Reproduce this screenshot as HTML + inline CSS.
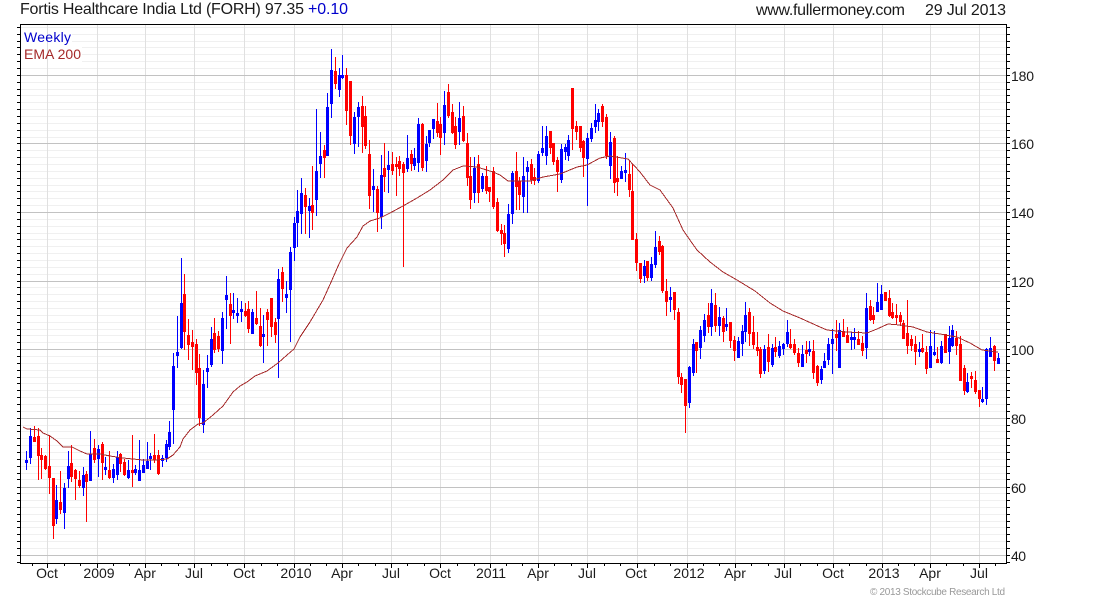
<!DOCTYPE html>
<html><head><meta charset="utf-8"><title>Fortis Healthcare India Ltd</title>
<style>html,body{margin:0;padding:0;background:#fff;width:1100px;height:600px;overflow:hidden}svg{display:block}text{font-family:"Liberation Sans",Arial,sans-serif}</style></head>
<body>
<svg xmlns="http://www.w3.org/2000/svg" width="1100" height="600" viewBox="0 0 1100 600">
<rect width="1100" height="600" fill="#fff"/>
<g shape-rendering="crispEdges" fill="none">
<path stroke="#000" d="M17 562.5h3M17 548.5h3M17 541.5h3M17 534.5h3M17 527.5h3M17 521.5h3M17 514.5h3M17 507.5h3M17 500.5h3M17 493.5h3M17 487.5h3M17 479.5h3M17 473.5h3M17 466.5h3M17 459.5h3M17 452.5h3M17 445.5h3M17 438.5h3M17 431.5h3M17 425.5h3M17 418.5h3M17 411.5h3M17 404.5h3M17 397.5h3M17 390.5h3M17 383.5h3M17 377.5h3M17 370.5h3M17 363.5h3M17 356.5h3M17 349.5h3M17 342.5h3M17 335.5h3M17 329.5h3M17 322.5h3M17 315.5h3M17 308.5h3M17 301.5h3M17 294.5h3M17 287.5h3M17 281.5h3M17 274.5h3M17 267.5h3M17 260.5h3M17 253.5h3M17 246.5h3M17 239.5h3M17 233.5h3M17 226.5h3M17 219.5h3M17 212.5h3M17 205.5h3M17 198.5h3M17 191.5h3M17 185.5h3M17 178.5h3M17 171.5h3M17 164.5h3M17 157.5h3M17 150.5h3M17 143.5h3M17 137.5h3M17 130.5h3M17 123.5h3M17 116.5h3M17 109.5h3M17 102.5h3M17 95.5h3M17 89.5h3M17 82.5h3M17 75.5h3M17 68.5h3M17 61.5h3M17 54.5h3M17 47.5h3M17 41.5h3M17 34.5h3M17 27.5h3M17 555.5h3"/>
<path stroke="#000" d="M1007 562.5h3M1007 548.5h3M1007 541.5h3M1007 534.5h3M1007 527.5h3M1007 521.5h3M1007 514.5h3M1007 507.5h3M1007 500.5h3M1007 493.5h3M1007 487.5h3M1007 479.5h3M1007 473.5h3M1007 466.5h3M1007 459.5h3M1007 452.5h3M1007 445.5h3M1007 438.5h3M1007 431.5h3M1007 425.5h3M1007 418.5h3M1007 411.5h3M1007 404.5h3M1007 397.5h3M1007 390.5h3M1007 383.5h3M1007 377.5h3M1007 370.5h3M1007 363.5h3M1007 356.5h3M1007 349.5h3M1007 342.5h3M1007 335.5h3M1007 329.5h3M1007 322.5h3M1007 315.5h3M1007 308.5h3M1007 301.5h3M1007 294.5h3M1007 287.5h3M1007 281.5h3M1007 274.5h3M1007 267.5h3M1007 260.5h3M1007 253.5h3M1007 246.5h3M1007 239.5h3M1007 233.5h3M1007 226.5h3M1007 219.5h3M1007 212.5h3M1007 205.5h3M1007 198.5h3M1007 191.5h3M1007 185.5h3M1007 178.5h3M1007 171.5h3M1007 164.5h3M1007 157.5h3M1007 150.5h3M1007 143.5h3M1007 137.5h3M1007 130.5h3M1007 123.5h3M1007 116.5h3M1007 109.5h3M1007 102.5h3M1007 95.5h3M1007 89.5h3M1007 82.5h3M1007 75.5h3M1007 68.5h3M1007 61.5h3M1007 54.5h3M1007 47.5h3M1007 41.5h3M1007 34.5h3M1007 27.5h3M1007 555.5h3"/>
<path stroke="#f0f0f0" d="M21 548.5h985M21 541.5h985M21 534.5h985M21 527.5h985M21 521.5h985M21 514.5h985M21 507.5h985M21 500.5h985M21 493.5h985M21 479.5h985M21 473.5h985M21 466.5h985M21 459.5h985M21 452.5h985M21 445.5h985M21 438.5h985M21 431.5h985M21 425.5h985M21 411.5h985M21 404.5h985M21 397.5h985M21 390.5h985M21 383.5h985M21 377.5h985M21 370.5h985M21 363.5h985M21 356.5h985M21 342.5h985M21 335.5h985M21 329.5h985M21 322.5h985M21 315.5h985M21 308.5h985M21 301.5h985M21 294.5h985M21 287.5h985M21 274.5h985M21 267.5h985M21 260.5h985M21 253.5h985M21 246.5h985M21 239.5h985M21 233.5h985M21 226.5h985M21 219.5h985M21 205.5h985M21 198.5h985M21 191.5h985M21 185.5h985M21 178.5h985M21 171.5h985M21 164.5h985M21 157.5h985M21 150.5h985M21 137.5h985M21 130.5h985M21 123.5h985M21 116.5h985M21 109.5h985M21 102.5h985M21 95.5h985M21 89.5h985M21 82.5h985M21 68.5h985M21 61.5h985M21 54.5h985M21 47.5h985M21 41.5h985M21 34.5h985M21 27.5h985"/>
<rect x="21" y="28" width="51" height="17" fill="#fff"/>
<rect x="21" y="45" width="61" height="18" fill="#fff"/>
<path stroke="#e0e0e0" d="M47.5 25V563M97.5 25V563M145.5 25V563M194.5 25V563M244.5 25V563M294.5 25V563M342.5 25V563M391.5 25V563M440.5 25V563M490.5 25V563M538.5 25V563M587.5 25V563M637.5 25V563M687.5 25V563M735.5 25V563M784.5 25V563M833.5 25V563M882.5 25V563M930.5 25V563M979.5 25V563"/>
<path stroke="#c2c2c2" d="M21 555.5h985M21 487.5h985M21 418.5h985M21 349.5h985M21 281.5h985M21 212.5h985M21 143.5h985M21 75.5h985"/>
<path stroke="#000" d="M20.5 24V564M20 24.5H1007M1006.5 24V564M20 563.5H1007"/>
<path stroke="#000" d="M47.5 564v4M97.5 564v4M145.5 564v4M194.5 564v4M244.5 564v4M294.5 564v4M342.5 564v4M391.5 564v4M440.5 564v4M490.5 564v4M538.5 564v4M587.5 564v4M637.5 564v4M687.5 564v4M735.5 564v4M784.5 564v4M833.5 564v4M882.5 564v4M930.5 564v4M979.5 564v4M32.5 564v2M64.5 564v2M80.5 564v2M113.5 564v2M129.5 564v2M161.5 564v2M178.5 564v2M211.5 564v2M227.5 564v2M261.5 564v2M277.5 564v2M310.5 564v2M326.5 564v2M358.5 564v2M375.5 564v2M407.5 564v2M424.5 564v2M457.5 564v2M474.5 564v2M506.5 564v2M522.5 564v2M554.5 564v2M571.5 564v2M604.5 564v2M620.5 564v2M654.5 564v2M670.5 564v2M703.5 564v2M719.5 564v2M751.5 564v2M768.5 564v2M800.5 564v2M817.5 564v2M849.5 564v2M866.5 564v2M898.5 564v2M914.5 564v2M946.5 564v2M963.5 564v2M995.5 564v2"/>
<!-- blue wicks -->
<path stroke="#00f" d="M26.5 451V470M30.5 428V464M56.5 485V524M64.5 483V529M68.5 451V488M83.5 467V496M90.5 431V481M98.5 445V477M105.5 457V475M113.5 464V483M117.5 451V480M128.5 460V479M135.5 465V475M139.5 440V481M143.5 459V473M147.5 442V469M150.5 453V470M162.5 455V467M166.5 440V462M169.5 421V450M173.5 353V444M177.5 316V368M181.5 258V349M203.5 370V433M207.5 355V388M211.5 327V367M222.5 312V364M226.5 276V329M233.5 293V319M237.5 298V323M241.5 301V322M252.5 309V334M263.5 315V363M278.5 269V378M286.5 281V313M290.5 247V342M294.5 217V261M297.5 190V247M301.5 178V234M309.5 198V238M316.5 109V216M320.5 132V178M327.5 93V156M331.5 49V118M339.5 68V97M342.5 55V79M354.5 112V154M358.5 102V147M373.5 169V212M381.5 155V229M388.5 151V193M407.5 135V172M414.5 148V170M418.5 118V172M426.5 136V172M429.5 130V147M433.5 119V139M444.5 91V145M459.5 102V145M474.5 157V203M482.5 173V192M508.5 204V253M512.5 171V224M523.5 157V213M527.5 161V213M538.5 151V183M542.5 126V156M546.5 126V165M561.5 144V183M565.5 144V160M568.5 135V161M587.5 133V206M591.5 123V142M595.5 104V133M598.5 109V131M610.5 132V179M621.5 166V179M625.5 153V182M644.5 260V283M651.5 257V281M655.5 231V268M670.5 287V312M689.5 366V408M693.5 339V376M700.5 326V359M704.5 314V342M711.5 289V336M719.5 307V336M726.5 308V331M738.5 337V358M742.5 325V356M745.5 302V342M764.5 345V374M772.5 344V367M779.5 341V358M783.5 343V355M787.5 320V347M802.5 345V367M809.5 341V356M821.5 366V384M824.5 353V368M828.5 338V365M832.5 329V374M839.5 323V368M851.5 332V350M854.5 328V349M866.5 293V359M877.5 283V312M881.5 285V310M919.5 342V357M930.5 330V368M934.5 331V356M941.5 341V364M949.5 326V364M952.5 325V347M967.5 373V393M982.5 387V403M986.5 348V405M990.5 337V357M998.5 353V364"/>
<!-- blue bodies -->
<path stroke="#00f" stroke-width="3" d="M26.5 460V463M30.5 436V458M56.5 500V519M64.5 488V513M68.5 466V479M83.5 475V488M90.5 454V481M98.5 449V459M105.5 467V470M113.5 469V478M117.5 457V475M128.5 470V478M135.5 469V473M139.5 470V481M143.5 465V473M147.5 461V469M150.5 456V459M162.5 458V461M166.5 444V458M169.5 432V447M173.5 366V410M177.5 352V356M181.5 303V348M203.5 384V425M207.5 368V372M211.5 339V365M222.5 318V351M226.5 295V300M233.5 310V313M237.5 313V316M241.5 309V312M252.5 312V334M263.5 334V337M278.5 279V319M286.5 294V298M290.5 252V290M294.5 223V248M297.5 211V223M301.5 193V214M309.5 206V211M316.5 171V200M320.5 156V164M327.5 107V156M331.5 70V104M339.5 75V90M342.5 75V78M354.5 117V144M358.5 107V117M373.5 186V190M381.5 175V217M388.5 165V170M407.5 158V169M414.5 158V166M418.5 124V163M426.5 144V161M429.5 130V143M433.5 119V129M444.5 105V133M459.5 118V132M474.5 168V193M482.5 176V189M508.5 214V249M512.5 173V214M523.5 176V197M527.5 167V172M538.5 154V181M542.5 148V153M546.5 136V156M561.5 149V180M565.5 147V152M568.5 140V156M587.5 138V159M591.5 128V139M595.5 120V127M598.5 113V122M610.5 142V166M621.5 171V179M625.5 170V173M644.5 266V276M651.5 264V278M655.5 247V265M670.5 297V300M689.5 367V403M693.5 344V373M700.5 330V348M704.5 320V336M711.5 303V327M719.5 317V326M726.5 324V327M738.5 341V358M742.5 331V344M745.5 315V332M764.5 349V371M772.5 348V365M779.5 346V356M783.5 344V349M787.5 332V344M802.5 354V367M809.5 349V352M821.5 369V380M824.5 361V368M828.5 344V360M832.5 339V344M839.5 330V368M851.5 337V340M854.5 337V340M866.5 308V348M877.5 302V312M881.5 294V310M919.5 349V352M930.5 346V368M934.5 352V355M941.5 346V363M949.5 338V352M952.5 330V346M967.5 382V392M982.5 399V402M986.5 349V399M990.5 348V357M998.5 358V364"/>
<!-- red wicks -->
<path stroke="#f00" d="M34.5 426V442M38.5 428V480M41.5 448V479M45.5 455V470M49.5 435V494M53.5 478V539M60.5 471V514M71.5 445V482M75.5 469V500M79.5 471V488M86.5 471V522M94.5 439V463M102.5 442V480M109.5 451V479M120.5 453V472M124.5 459V476M132.5 435V487M154.5 434V463M158.5 450V475M184.5 274V350M188.5 319V360M192.5 330V370M196.5 339V385M199.5 354V426M214.5 318V353M218.5 331V352M230.5 293V344M245.5 303V317M248.5 301V333M256.5 291V325M260.5 308V347M267.5 309V346M271.5 298V337M275.5 318V343M282.5 267V302M305.5 188V234M312.5 166V230M324.5 145V178M335.5 57V89M346.5 68V125M350.5 81V145M362.5 96V153M365.5 106V149M369.5 140V209M377.5 186V232M384.5 143V192M392.5 152V175M396.5 157V196M399.5 156V176M403.5 162V267M411.5 150V171M422.5 123V171M437.5 103V137M440.5 117V155M448.5 84V118M452.5 104V134M455.5 117V149M463.5 106V142M467.5 133V186M470.5 157V209M478.5 155V203M486.5 166V194M489.5 187V202M493.5 167V209M497.5 198V232M501.5 224V245M504.5 225V257M516.5 152V210M519.5 177V210M531.5 159V184M534.5 168V185M550.5 131V154M553.5 143V165M557.5 157V192M572.5 88V150M576.5 121V140M580.5 126V152M583.5 140V177M602.5 104V127M606.5 114V159M614.5 136V193M617.5 156V196M629.5 160V197M632.5 164V240M636.5 233V271M640.5 263V283M647.5 261V281M659.5 236V255M662.5 245V293M666.5 279V316M674.5 292V320M678.5 308V384M681.5 373V393M685.5 379V433M696.5 342V373M708.5 303V333M715.5 293V332M723.5 316V342M730.5 322V348M734.5 336V361M749.5 308V346M753.5 316V349M757.5 332V356M760.5 347V378M768.5 334V372M775.5 337V357M790.5 329V349M794.5 339V355M798.5 348V367M806.5 341V363M813.5 340V379M817.5 365V386M836.5 320V351M843.5 319V337M847.5 327V343M858.5 331V345M862.5 336V356M870.5 300V321M873.5 307V324M885.5 292V301M889.5 290V317M892.5 303V319M896.5 304V325M900.5 312V326M903.5 320V339M907.5 300V354M911.5 335V351M915.5 336V365M922.5 334V353M926.5 346V374M937.5 347V363M945.5 334V353M956.5 331V355M960.5 336V381M964.5 365V395M971.5 372V388M975.5 371V394M979.5 390V407M994.5 345V371"/>
<!-- red bodies -->
<path stroke="#f00" stroke-width="3" d="M34.5 437V442M38.5 436V456M41.5 455V460M45.5 456V469M49.5 466V478M53.5 478V526M60.5 502V510M71.5 463V477M75.5 470V479M79.5 480V486M86.5 474V482M94.5 448V460M102.5 444V463M109.5 470V478M120.5 454V464M124.5 462V475M132.5 470V473M154.5 455V460M158.5 455V474M184.5 294V332M188.5 335V345M192.5 342V347M196.5 344V373M199.5 368V418M214.5 333V350M218.5 336V349M230.5 304V316M245.5 311V316M248.5 309V329M256.5 318V324M260.5 326V346M267.5 312V320M271.5 298V327M275.5 322V335M282.5 272V289M305.5 195V207M312.5 205V213M324.5 150V158M335.5 71V84M346.5 75V111M350.5 81V136M362.5 106V127M365.5 116V146M369.5 154V196M377.5 189V213M384.5 168V177M392.5 164V171M396.5 164V167M399.5 161V169M403.5 164V173M411.5 154V164M422.5 124V168M437.5 121V133M440.5 124V138M448.5 92V116M452.5 112V133M455.5 126V145M463.5 116V141M467.5 143V178M470.5 176V200M478.5 164V193M486.5 176V191M489.5 187V192M493.5 171V207M497.5 202V231M501.5 230V234M504.5 233V244M516.5 171V187M519.5 181V195M531.5 164V180M534.5 177V181M550.5 131V148M553.5 143V162M557.5 160V172M572.5 88V129M576.5 126V132M580.5 126V148M583.5 141V158M602.5 106V122M606.5 117V156M614.5 138V183M617.5 178V182M629.5 174V190M632.5 191V240M636.5 239V263M640.5 263V279M647.5 261V278M659.5 241V252M662.5 246V291M666.5 291V302M674.5 292V310M678.5 312V377M681.5 377V385M685.5 379V406M696.5 342V351M708.5 315V327M715.5 305V326M723.5 318V332M730.5 322V341M734.5 340V351M749.5 312V334M753.5 332V345M757.5 347V351M760.5 349V374M768.5 347V362M775.5 347V352M790.5 344V348M794.5 344V353M798.5 353V363M806.5 350V354M813.5 351V373M817.5 366V383M836.5 334V338M843.5 331V337M847.5 335V343M858.5 339V345M862.5 343V351M870.5 306V320M873.5 315V320M885.5 292V301M889.5 298V316M892.5 312V318M896.5 315V318M900.5 315V322M903.5 323V339M907.5 333V346M911.5 339V346M915.5 344V352M922.5 348V352M926.5 352V369M937.5 359V363M945.5 334V353M956.5 338V346M960.5 344V381M964.5 368V391M971.5 376V379M975.5 380V392M979.5 390V399M994.5 346V361"/>
<polyline stroke="#a52a2a" points="23,427 27,429 40,430 43,433 50,436 57,441 63,447 72,447 80,451 87,454 100,454 110,456 123,458 133,459 143,460 157,460 167,459 173,455 180,447 183,439 190,430 198,424 203,423 213,415 223,406 233,392 240,386 247,382 255,376 267,371 278,363 287,355 294,349 300,337 310,322 323,300 332,280 339,264 347,248 357,237 363,226 370,221 380,218 390,213 403,206 417,198 430,190 443,180 453,170 463,166 477,167 493,172 500,175 508,181 530,181 543,177 560,174 577,167 587,165 600,158 610,156 628,159 640,172 650,185 660,190 673,208 683,230 692,243 697,250 710,262 723,272 737,280 755,291 770,303 783,311 800,318 820,327 827,330 847,332 867,333 877,329 888,324 900,325 913,327 927,332 940,334 957,337 970,343 982,350 998,352"/>
</g>
<g font-size="16" fill="#1a1a1a">
<text x="20" y="14" textLength="284" lengthAdjust="spacing">Fortis Healthcare India Ltd (FORH) 97.35</text>
<text x="308" y="14" textLength="40" lengthAdjust="spacing" fill="#0000cc">+0.10</text>
<text x="756" y="15" textLength="149" lengthAdjust="spacing">www.fullermoney.com</text>
<text x="925" y="15" textLength="81" lengthAdjust="spacing">29 Jul 2013</text>
</g>
<text x="24" y="42" font-size="14" fill="#0000cc" textLength="47" lengthAdjust="spacing">Weekly</text>
<text x="24" y="59" font-size="14" fill="#a52a2a" textLength="57" lengthAdjust="spacing">EMA 200</text>
<g font-size="14" fill="#1a1a1a">
<text x="1011" y="81" textLength="23" lengthAdjust="spacing">180</text>
<text x="1011" y="149" textLength="23" lengthAdjust="spacing">160</text>
<text x="1011" y="218" textLength="23" lengthAdjust="spacing">140</text>
<text x="1011" y="287" textLength="23" lengthAdjust="spacing">120</text>
<text x="1011" y="355" textLength="23" lengthAdjust="spacing">100</text>
<text x="1011" y="424" textLength="15" lengthAdjust="spacing">80</text>
<text x="1011" y="493" textLength="15" lengthAdjust="spacing">60</text>
<text x="1011" y="561" textLength="15" lengthAdjust="spacing">40</text>
</g>
<g font-size="14" fill="#1a1a1a" text-anchor="middle">
<text x="47" y="578">Oct</text><text x="99" y="578">2009</text><text x="145" y="578">Apr</text><text x="194" y="578">Jul</text><text x="244" y="578">Oct</text><text x="296" y="578">2010</text><text x="342" y="578">Apr</text><text x="391" y="578">Jul</text><text x="440" y="578">Oct</text><text x="491" y="578">2011</text><text x="538" y="578">Apr</text><text x="587" y="578">Jul</text><text x="636" y="578">Oct</text><text x="689" y="578">2012</text><text x="735" y="578">Apr</text><text x="783" y="578">Jul</text><text x="833" y="578">Oct</text><text x="884" y="578">2013</text><text x="930" y="578">Apr</text><text x="979" y="578">Jul</text>
</g>
<text x="870" y="595" font-size="10" fill="#999" textLength="135" lengthAdjust="spacing">© 2013 Stockcube Research Ltd</text>
</svg>
</body></html>
